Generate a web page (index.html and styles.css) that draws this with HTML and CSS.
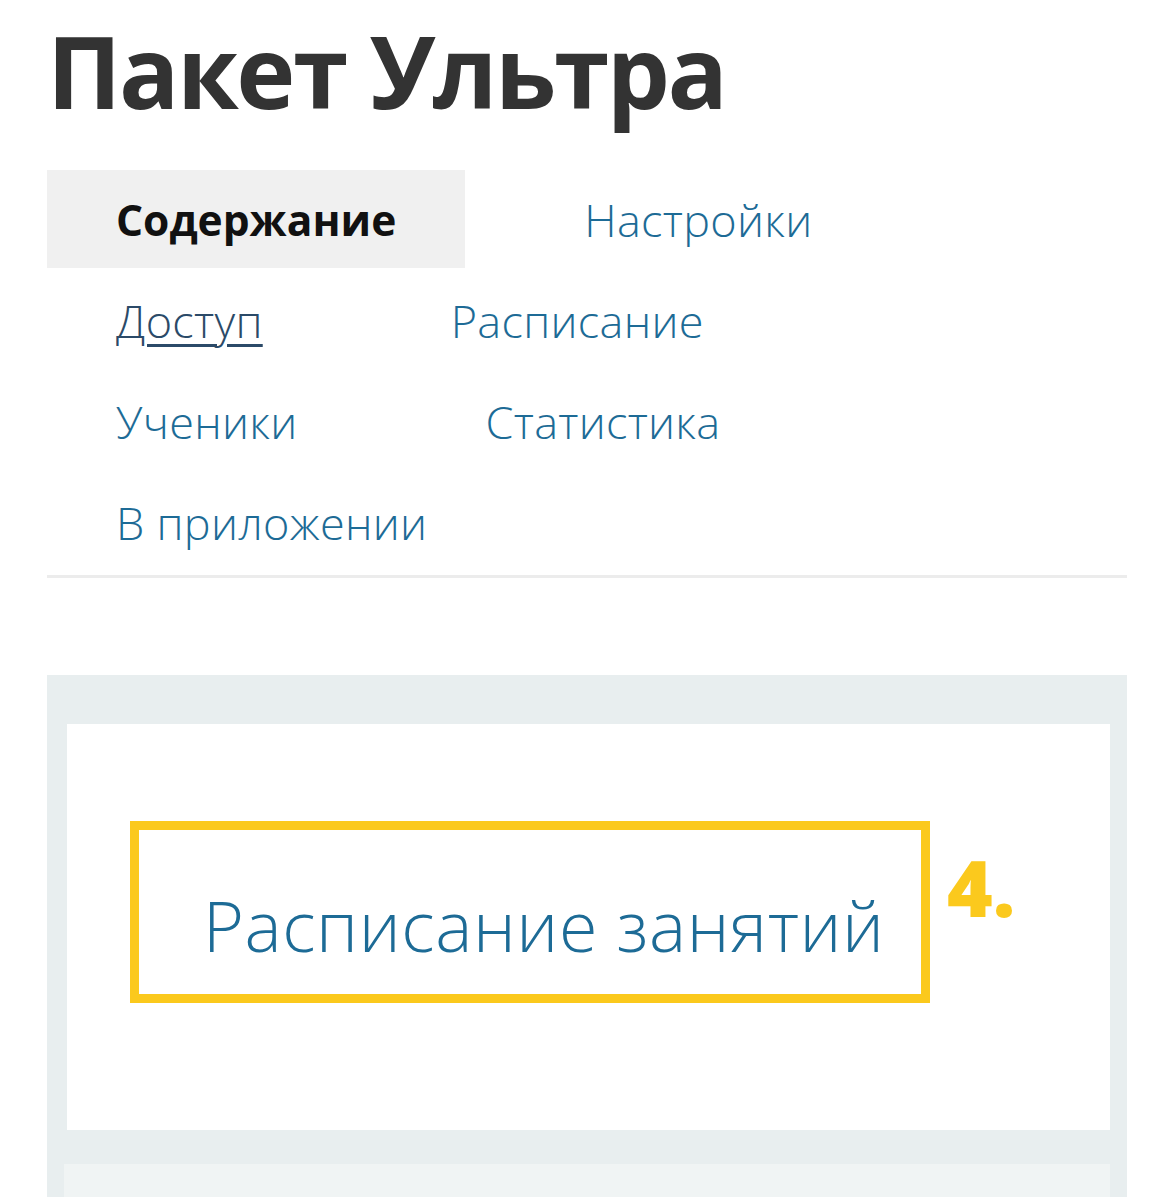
FILE: index.html
```html
<!DOCTYPE html>
<html lang="ru">
    <head>
        <meta charset="UTF-8">
        <meta name="viewport" content="width=device-width, initial-scale=1.0">
        <title>Пакет Ультра</title>
        <link rel="stylesheet" href="styles.css">
    </head>
    <body>
        <h1 class="page-title">Пакет Ультра</h1>

        <nav class="tabs">
            <a class="tab active" href="#">Содержание</a>
            <a class="tab" href="#">Настройки</a>
            <a class="tab hover" href="#">Доступ</a>
            <a class="tab" href="#">Расписание</a>
            <a class="tab" href="#">Ученики</a>
            <a class="tab" href="#">Статистика</a>
            <a class="tab" href="#">В приложении</a>
        </nav>

        <div class="panel">
            <div class="card">
                <div class="lesson-row">
                    <div class="highlight">
                        <a class="lesson-link" href="#">Расписание занятий</a>
                    </div>
                    <span class="step">4.</span>
                </div>
            </div>
            <div class="card next"></div>
        </div>
    </body>
</html>
```
FILE: styles.css
```css
body {
    margin: 0;
    padding: 0 47px;
    background-color: white;
    font-family: "Open Sans", "DejaVu Sans", sans-serif;
    height: 1197px;
    overflow: hidden;
}
.page-title {
    margin: 0;
    padding-top: 10px;
    height: 160px;
    font-size: 100px;
    font-weight: 700;
    letter-spacing: -2.5px;
    color: #333333;
    line-height: 1.2;
}
.tabs {
    display: flex;
    flex-wrap: wrap;
    column-gap: 50px;
    row-gap: 3px;
    padding: 0 80px 4px 0;
    border-bottom: 3px solid #ececec;
}
.tab {
    display: flex;
    align-items: center;
    height: 98px;
    padding: 0 69px;
    font-size: 45px;
    font-weight: 300;
    letter-spacing: 0.3px;
    color: #1d6b96;
    text-decoration: none;
    white-space: nowrap;
}
.tab.active {
    background-color: #f0f0f0;
    color: #111111;
    font-size: 42.5px;
    font-weight: 700;
    letter-spacing: 0;
}
.tab.hover {
    color: #2b4a68;
    text-decoration: underline;
    text-decoration-thickness: 3px;
    text-underline-offset: 6px;
}
.panel {
    margin-top: 97px;
    background-color: #e8eeef;
    padding: 49px 17px 0 20px;
    height: 522px;
    box-sizing: border-box;
    overflow: hidden;
}
.card {
    background-color: white;
    height: 406px;
}
.card.next {
    margin-top: 34px;
    margin-left: -3px;
    background-color: #f0f4f4;
}
.lesson-row {
    display: flex;
    align-items: flex-start;
    padding: 97px 0 0 63px;
}
.highlight {
    border: 9px solid #fbc91d;
    width: 800px;
    height: 182px;
    padding: 60px 0 0 64px;
    box-sizing: border-box;
}
.lesson-link {
    display: block;
    font-size: 70px;
    font-weight: 300;
    letter-spacing: 0.6px;
    line-height: 1;
    color: #1d6b96;
    text-decoration: none;
    white-space: nowrap;
}
.step {
    margin: 20px 0 0 17px;
    font-size: 78px;
    font-weight: 800;
    color: #fbc91d;
    line-height: 1.2;
}
```
